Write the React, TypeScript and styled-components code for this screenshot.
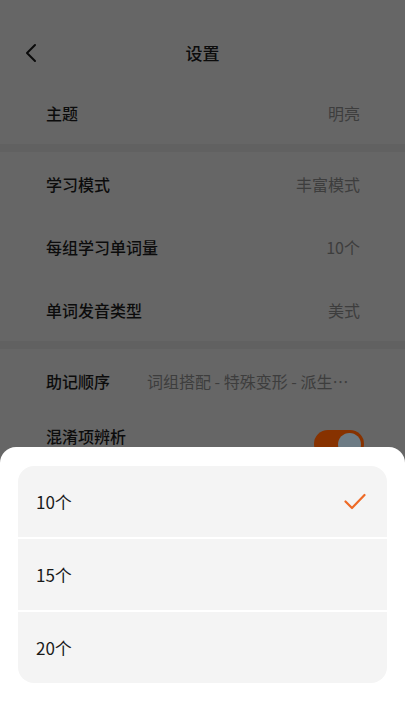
import React from "react";
import styled, { createGlobalStyle } from "styled-components";

const Global = createGlobalStyle`
  html, body { margin: 0; padding: 0; }
  body {
    font-family: "Noto Sans CJK SC", "Noto Sans", sans-serif;
    background: #f3f3f3;
  }
  * { box-sizing: border-box; }
`;

const Page = styled.div`
  position: relative;
  width: 405px;
  height: 720px;
  overflow: hidden;
  background: #f3f3f3;
  display: flex;
  flex-direction: column;
  gap: 8px;
`;

const Header = styled.div`
  position: relative;
  height: 81px;
  margin-bottom: -8px;
  padding-top: 24px;
  background: #fff;
  display: flex;
  align-items: flex-start;
  justify-content: center;
`;

const HeaderInner = styled.div`
  height: 56px;
  width: 100%;
  display: grid;
  grid-template-columns: 60px 1fr 60px;
  align-items: center;
`;

const BackButton = styled.div`
  display: flex;
  align-items: center;
  padding-left: 24px;
  padding-top: 2px;
  color: #222;
`;

const Title = styled.div`
  text-align: center;
  font-size: 17px;
  color: #1e1e1e;
  font-weight: 500;
`;

const Section = styled.div`
  background: #fff;
  display: flex;
  flex-direction: column;
`;

const Row = styled.div<{ $tall?: boolean }>`
  height: ${(p) => (p.$tall ? "90px" : "63px")};
  padding: ${(p) => (p.$tall ? "13px 41px 0 46px" : "0 45px 0 46px")};
  display: flex;
  align-items: ${(p) => (p.$tall ? "flex-start" : "center")};
  justify-content: space-between;
`;

const Label = styled.div`
  font-size: 16px;
  line-height: 22px;
  font-weight: 500;
  color: #1f1f1f;
  white-space: nowrap;
  flex-shrink: 0;
`;

const Value = styled.div<{ $wide?: boolean }>`
  font-size: 16px;
  line-height: 22px;
  color: #9a9a9a;
  white-space: nowrap;
  overflow: hidden;
  text-overflow: ellipsis;
  min-width: 0;
  margin-left: ${(p) => (p.$wide ? "37px" : "0")};
  text-align: right;
`;

const Toggle = styled.div`
  position: relative;
  z-index: 11;
  margin-top: 5px;
  width: 50px;
  height: 28px;
  border-radius: 14px;
  background: #873200;
  display: flex;
  align-items: center;
  justify-content: flex-end;
  padding: 0 3px;
`;

const Knob = styled.div`
  width: 23px;
  height: 23px;
  border-radius: 50%;
  background: #6d7b84;
`;

const Overlay = styled.div`
  position: absolute;
  inset: 0;
  z-index: 10;
  background: rgba(0, 0, 0, 0.6);
`;

const Sheet = styled.div`
  position: absolute;
  left: 0;
  right: 0;
  bottom: 0;
  z-index: 12;
  height: 273px;
  background: #fff;
  border-radius: 16px 16px 0 0;
  padding: 19px 18px 0;
`;

const OptionCard = styled.div`
  border-radius: 16px;
  overflow: hidden;
  background: #fff;
  display: flex;
  flex-direction: column;
  gap: 2px;
`;

const Option = styled.div`
  height: 71px;
  background: #f4f4f4;
  display: flex;
  align-items: center;
  justify-content: space-between;
  padding: 0 21px 0 18px;
  font-size: 17px;
  color: #1a1a1a;
`;

const Check = () => (
  <svg width="22" height="18" viewBox="0 0 22 18" fill="none">
    <path
      d="M1.5 8.5 L8 15 L20.5 2"
      stroke="#ee6a26"
      strokeWidth="2.2"
      strokeLinecap="round"
      strokeLinejoin="round"
    />
  </svg>
);

const Chevron = () => (
  <svg width="14" height="20" viewBox="0 0 14 20" fill="none">
    <path
      d="M11 2 L3 10 L11 18"
      stroke="#1a1a1a"
      strokeWidth="2"
      strokeLinecap="round"
      strokeLinejoin="round"
    />
  </svg>
);

const options = ["10个", "15个", "20个"];

export default function App() {
  return (
    <>
      <Global />
      <Page>
        <Header>
          <HeaderInner>
            <BackButton>
              <Chevron />
            </BackButton>
            <Title>设置</Title>
            <div />
          </HeaderInner>
        </Header>
        <Section>
          <Row>
            <Label>主题</Label>
            <Value>明亮</Value>
          </Row>
        </Section>
        <Section>
          <Row>
            <Label>学习模式</Label>
            <Value>丰富模式</Value>
          </Row>
          <Row>
            <Label>每组学习单词量</Label>
            <Value>10个</Value>
          </Row>
          <Row>
            <Label>单词发音类型</Label>
            <Value>美式</Value>
          </Row>
        </Section>
        <Section>
          <Row>
            <Label>助记顺序</Label>
            <Value $wide>词组搭配 - 特殊变形 - 派生词 - 同根词</Value>
          </Row>
          <Row $tall>
            <Label>混淆项辨析</Label>
            <Toggle>
              <Knob />
            </Toggle>
          </Row>
        </Section>
        <Overlay />
        <Sheet>
          <OptionCard>
            {options.map((o, i) => (
              <Option key={o}>
                <span>{o}</span>
                {i === 0 && <Check />}
              </Option>
            ))}
          </OptionCard>
        </Sheet>
      </Page>
    </>
  );
}
